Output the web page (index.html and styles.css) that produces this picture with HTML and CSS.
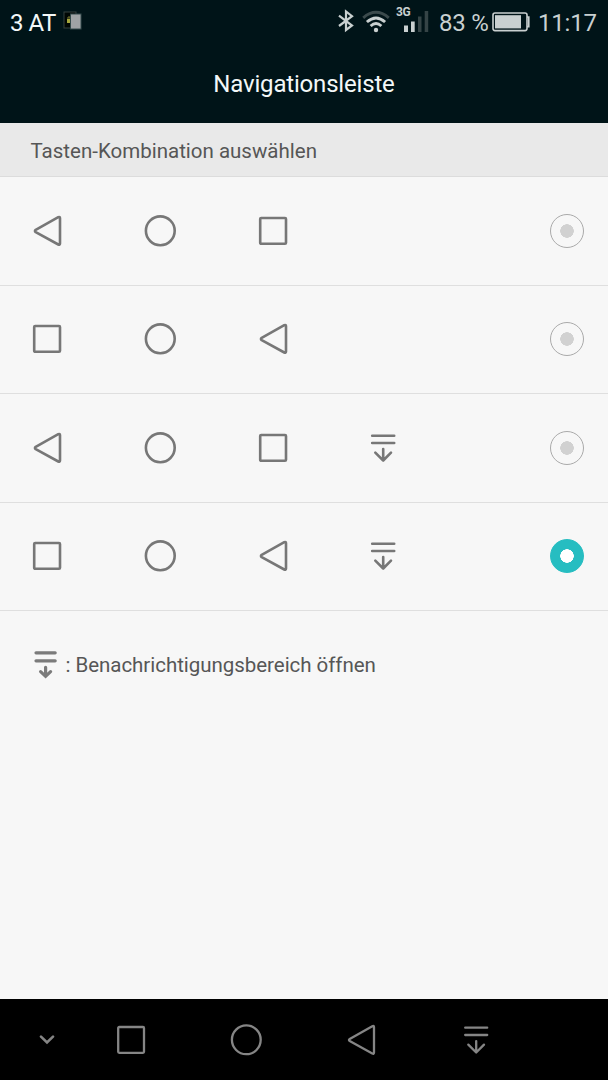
FILE: index.html
```
<!DOCTYPE html>
<html lang="de">
<head>
	<meta charset="utf-8">
	<title>Navigationsleiste</title>
	<link rel="stylesheet" href="styles.css">
</head>
<body>
	<!-- shared key icons -->
	<svg class="defs" width="0" height="0">
		<symbol id="back" viewBox="0 0 32 32">
			<path d="M4.7 14.9 27.3 2.2Q29 1.5 29 3.2V28.6Q29 30.3 27.3 29.5L4.7 17.1Q3.2 16 4.7 14.9Z"/>
		</symbol>
		<symbol id="home" viewBox="0 0 32 32">
			<circle cx="16.3" cy="15.8" r="14.4"/>
		</symbol>
		<symbol id="recent" viewBox="0 0 32 32">
			<rect x="3.2" y="3" width="25.8" height="25.8" rx="1"/>
		</symbol>
		<symbol id="panel" viewBox="0 0 32 32">
			<path d="M5.2 3.7H27.2M5.2 11H27.2M16.2 17.1V28.5M8.3 20.6 16.2 28.5 24 20.6"/>
		</symbol>
	</svg>

	<header>
		<div class="status">
			<span class="carrier">3 AT</span>
			<svg class="sim" width="20" height="20" viewBox="0 0 20 20">
				<rect x="1" y="1" width="12" height="16" fill="#000704" stroke="#34413f"/>
				<rect x="4" y="8" width="4" height="4" fill="#a5a63c"/>
				<path d="M5 8V6H7V8" fill="none" stroke="#77762e"/>
				<rect x="7.5" y="3" width="10.5" height="15" fill="#9fa3a5" stroke="#344b4c"/>
			</svg>
			<svg class="bluetooth" width="18" height="24" viewBox="0 0 18 24">
				<path d="M2 6.7 15 16.5 9 21V2.5L15 7.2 2 17"/>
			</svg>
			<svg class="wifi" width="28" height="24" viewBox="0 0 28 24">
				<path class="dim" d="M1.2 7.8Q14 -3.2 26.8 7.8"/>
				<path d="M4.9 12Q14 3.8 23.1 12M8.6 16Q14 11.2 19.4 16"/>
				<circle cx="14" cy="20" r="2.2"/>
			</svg>
			<div class="mobile">
				<span>3G</span>
				<svg width="34" height="26" viewBox="0 0 34 26">
					<path d="M9 19.5H13V26H9ZM16 15.5H19.7V26H16Z"/>
					<path class="dim" d="M23 10.5H26.5V26H23ZM29.7 5H33.2V26H29.7Z"/>
				</svg>
			</div>
			<span class="percent">83 %</span>
			<svg class="battery" width="38" height="20" viewBox="0 0 38 20">
				<rect x="1" y="1" width="34" height="17.6" rx="2" fill="none" stroke="#c9d0d0" stroke-width="1.6"/>
				<rect x="3" y="3.2" width="26" height="13.2" fill="#c9d0d0"/>
				<path d="M35 5H36.8V14.6H35" fill="none" stroke="#c9d0d0" stroke-width="1.6"/>
			</svg>
			<span class="time">11:17</span>
		</div>
		<h1>Navigationsleiste</h1>
	</header>

	<h2>Tasten-Kombination auswählen</h2>
	<ul class="options">
		<li>
			<svg class="key"><use href="#back"/></svg>
			<svg class="key"><use href="#home"/></svg>
			<svg class="key"><use href="#recent"/></svg>
			<span class="radio"></span>
		</li>
		<li>
			<svg class="key"><use href="#recent"/></svg>
			<svg class="key"><use href="#home"/></svg>
			<svg class="key"><use href="#back"/></svg>
			<span class="radio"></span>
		</li>
		<li>
			<svg class="key"><use href="#back"/></svg>
			<svg class="key"><use href="#home"/></svg>
			<svg class="key"><use href="#recent"/></svg>
			<svg class="key"><use href="#panel"/></svg>
			<span class="radio"></span>
		</li>
		<li>
			<svg class="key"><use href="#recent"/></svg>
			<svg class="key"><use href="#home"/></svg>
			<svg class="key"><use href="#back"/></svg>
			<svg class="key"><use href="#panel"/></svg>
			<span class="radio checked"></span>
		</li>
	</ul>
	<div class="hint">
		<svg width="24" height="30" viewBox="0 0 24 30">
			<path d="M2 2.8H21.2M2 10.8H21.2M11.6 17.3V26M6.6 21.7 11.6 26.4 16.6 21.7"/>
		</svg>
		<p>: Benachrichtigungsbereich öffnen</p>
	</div>

	<nav>
		<svg class="hide" width="16" height="10" viewBox="0 0 16 10"><path d="M2 1.6 8 7.4 14 1.6"/></svg>
		<svg class="key"><use href="#recent"/></svg>
		<svg class="key"><use href="#home"/></svg>
		<svg class="key"><use href="#back"/></svg>
		<svg class="key"><use href="#panel"/></svg>
	</nav>
</body>
</html>
```

FILE: styles.css
```
*{
	box-sizing: border-box;
}
body{
	margin: 0;
	height: 1080px;
	display: flex;
	flex-direction: column;
	background: #f7f7f7;
	font-family: Roboto, sans-serif;
	color: #565656;
	overflow: hidden;
}
h1,h2,p,ul{
	margin: 0;
	padding: 0;
	font-weight: normal;
}
svg{
	display: block;
	flex: none;
}
.defs{
	position: absolute;
}
header{
	height: 123px;
	background: #001418;
	color: #f3f8f8;
}
.status{
	display: flex;
	height: 44px;
	padding: 0 11px 0 10px;
	font-size: 24px;
	line-height: 46px;
	white-space: nowrap;
}
.carrier{
	width: 53px;
	letter-spacing: -0.5px;
}
.sim{
	margin-top: 11px;
}
.bluetooth{
	margin: 9px 0 0 auto;
	fill: none;
	stroke: #c9d0d0;
	stroke-width: 2.2;
}
.wifi{
	margin: 10px 0 0 7px;
	fill: none;
	stroke: #c9d0d0;
	stroke-width: 2.9;
}
.wifi circle{
	fill: #c9d0d0;
	stroke: none;
}
.wifi .dim{
	stroke: #3b4a4c;
}
.mobile{
	position: relative;
	margin: 6px 0 0 5px;
	fill: #c9d0d0;
}
.mobile span{
	position: absolute;
	left: 1px;
	top: 0;
	font-size: 12px;
	font-weight: bold;
	line-height: 12px;
	letter-spacing: -0.3px;
	color: #c9d0d0;
}
.mobile .dim{
	fill: #354446;
}
.percent{
	width: 53px;
	margin-left: 10px;
	letter-spacing: -0.2px;
	color: #c9d0d0;
}
.battery{
	margin-top: 12px;
}
.time{
	width: 59px;
	margin-left: 8px;
	letter-spacing: -0.2px;
	color: #c9d0d0;
}
h1{
	font-size: 24px;
	line-height: 80px;
	letter-spacing: -0.18px;
	text-align: center;
}
h2{
	height: 54px;
	padding-left: 30.5px;
	border-bottom: 1px solid #dcdcdc;
	background: #e9e9e9;
	font-size: 20.5px;
	line-height: 56px;
}
.options{
	list-style: none;
}
.options li{
	display: grid;
	grid-template-columns: 113.3px 112.9px 109.8px 1fr 34px;
	align-items: center;
	height: 108.5px;
	padding: 0 24px 0 31px;
	border-bottom: 1px solid #dfdfdf;
}
.key{
	width: 32px;
	height: 32px;
	fill: none;
	stroke: #777;
	stroke-width: 2.6;
	stroke-linecap: round;
	stroke-linejoin: round;
}
.radio{
	grid-column: 5;
	width: 34px;
	height: 34px;
	border: 1px solid #aaa;
	border-radius: 50%;
	background: radial-gradient(circle, #d1d1d1 6.5px, transparent 7px);
}
.checked{
	border-color: #26bdc1;
	background: radial-gradient(circle, #fff 6.5px, #26bdc1 7px);
}
.hint{
	display: flex;
	padding: 38.5px 0 0 34px;
	font-size: 20.5px;
	line-height: 31px;
}
.hint svg{
	fill: none;
	stroke: #7b7b7b;
	stroke-width: 3.2;
	stroke-linecap: round;
}
.hint p{
	margin-left: 7.5px;
	letter-spacing: -0.04px;
}
nav{
	display: flex;
	align-items: center;
	height: 81px;
	margin-top: auto;
	padding-left: 39.3px;
	background: #000;
}
nav .key{
	margin-right: 82.9px;
	stroke: #858585;
	stroke-width: 2.3;
}
.hide{
	margin-right: 60.2px;
	fill: none;
	stroke: #858585;
	stroke-width: 2.6;
	stroke-linecap: round;
}
```
